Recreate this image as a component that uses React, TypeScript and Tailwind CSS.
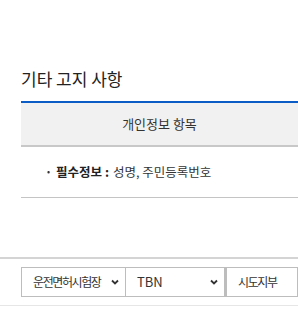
const Chevron = () => (
  <svg width="8" height="6" viewBox="0 0 8 6" className="shrink-0">
    <path d="M1 1.5 L4 4.5 L7 1.5" fill="none" stroke="#333" strokeWidth="1.8" />
  </svg>
);

const App = () => {
  return (
    <div className="w-[298px] h-[317px] bg-white overflow-hidden font-['Noto_Sans_CJK_KR','Noto_Sans',sans-serif]">
      <div className="pl-[21px] pt-[67px]">
        <h2 className="text-[17px] leading-[24px] text-[#222] font-normal">기타 고지 사항</h2>
        <div className="mt-[10px] border-t-2 border-[#0b5cc4]">
          <div className="h-[44px] bg-[#f1f1f1] border-b-2 border-[#c8c8c8] flex items-center justify-center text-[13px] text-[#333]">
            개인정보 항목
          </div>
          <div className="h-[51px] border-b border-[#c4c4c4] flex items-center pl-[26px] text-[12.5px] text-[#333]">
            <span className="text-[9px] mr-[6px]">•</span>
            <span className="font-bold text-[#222]">필수정보 :</span>
            <span className="ml-[4px]">성명, 주민등록번호</span>
          </div>
        </div>
      </div>
      <div className="mt-[59px] border-t-2 border-[#d4d4d4]">
        <div className="pl-[21px] py-[8px] flex text-[12px] tracking-[-1.4px] text-[#333]">
          <div className="w-[105px] h-[30px] border border-[#bdbdbd] flex items-center justify-between pl-[11px] pr-[6px]">
            <span className="whitespace-nowrap">운전면허시험장</span>
            <Chevron />
          </div>
          <div className="w-[99px] h-[30px] border border-l-0 border-[#bdbdbd] flex items-center justify-between pl-[11px] pr-[6px]">
            <span className="tracking-normal text-[13px]">TBN</span>
            <Chevron />
          </div>
          <div className="flex-1 h-[30px] border border-l-2 border-[#bdbdbd] flex items-center pl-[11px]">
            <span className="whitespace-nowrap">시도지부</span>
          </div>
        </div>
        <div className="border-t border-[#e6e6e6]" />
      </div>
    </div>
  );
};

export default App;
